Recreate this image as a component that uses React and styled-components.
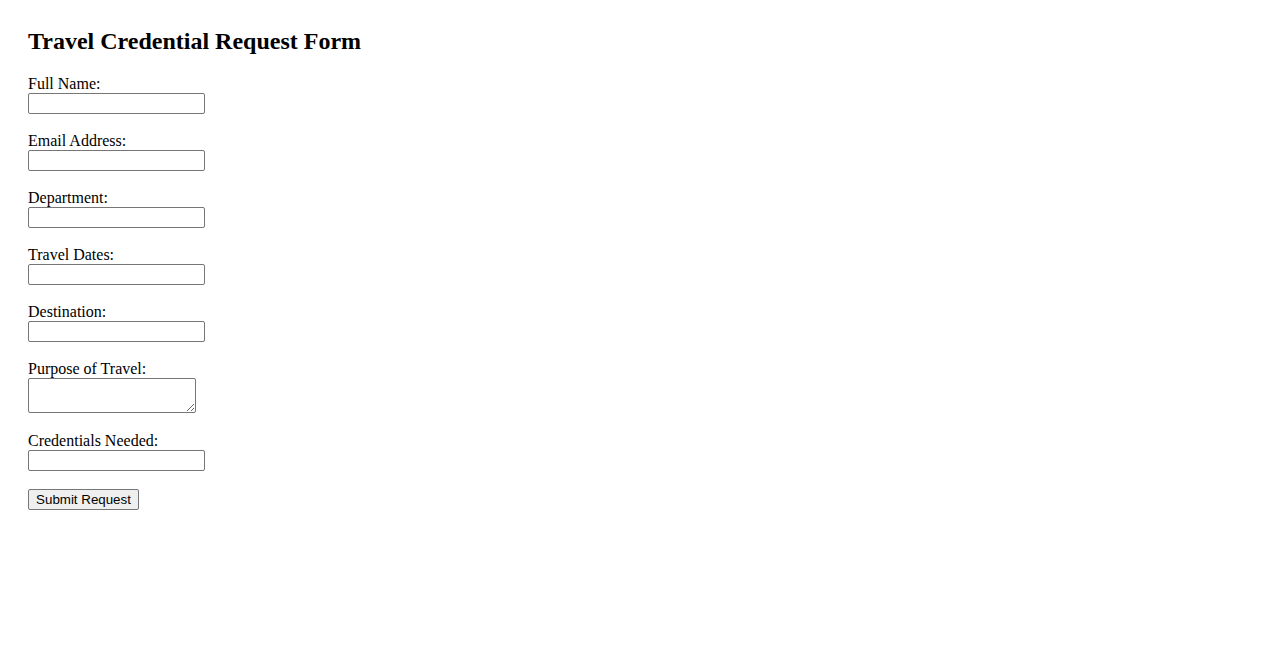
import React from "react";
import styled, { createGlobalStyle } from "styled-components";

const GlobalStyle = createGlobalStyle`
  body {
    margin: 0;
    background: #fff;
    color: #000;
    font-family: "Liberation Serif", "Times New Roman", serif;
    font-size: 16px;
  }
`;

const Page = styled.div`
  padding: 28px;
`;

const Title = styled.h2`
  margin: 0 0 20px 0;
  font-size: 24px;
  font-weight: bold;
  line-height: 27px;
`;

const Form = styled.form`
  display: flex;
  flex-direction: column;
  align-items: flex-start;
`;

const Field = styled.div`
  display: flex;
  flex-direction: column;
  align-items: flex-start;
  margin-bottom: ${(p) => p.$gap || 18}px;
`;

const Label = styled.label`
  line-height: 18px;
  height: 18px;
`;

const InputField = styled.input`
  box-sizing: border-box;
  width: 177px;
  height: 21px;
  margin: 0;
  padding: 1px 2px;
  border: 1px solid #767676;
  border-radius: 2px;
  font-family: "Liberation Sans", Arial, sans-serif;
  font-size: 13.333px;
  background: #fff;
`;

const TextArea = styled.textarea`
  box-sizing: border-box;
  width: 168px;
  height: 35px;
  margin: 0;
  padding: 2px;
  border: 1px solid #767676;
  border-radius: 2px;
  font-family: "Liberation Mono", monospace;
  font-size: 13.333px;
  background: #fff;
`;

const SubmitButton = styled.button`
  box-sizing: border-box;
  width: 111px;
  height: 21px;
  margin: 0;
  padding: 1px 6px;
  border: 1px solid #767676;
  border-radius: 2px;
  background: #efefef;
  color: #000;
  font-family: "Liberation Sans", Arial, sans-serif;
  font-size: 13.333px;
  line-height: 17px;
`;

const fields = [
  { id: "name", label: "Full Name:" },
  { id: "email", label: "Email Address:" },
  { id: "dept", label: "Department:" },
  { id: "dates", label: "Travel Dates:" },
  { id: "dest", label: "Destination:" },
];

export default function App() {
  return (
    <Page>
      <GlobalStyle />
      <Title>Travel Credential Request Form</Title>
      <Form onSubmit={(e) => e.preventDefault()}>
        {fields.map((f) => (
          <Field key={f.id}>
            <Label htmlFor={f.id}>{f.label}</Label>
            <InputField id={f.id} type="text" />
          </Field>
        ))}
        <Field $gap={19}>
          <Label htmlFor="purpose">Purpose of Travel:</Label>
          <TextArea id="purpose" />
        </Field>
        <Field>
          <Label htmlFor="creds">Credentials Needed:</Label>
          <InputField id="creds" type="text" />
        </Field>
        <SubmitButton type="submit">Submit Request</SubmitButton>
      </Form>
    </Page>
  );
}
